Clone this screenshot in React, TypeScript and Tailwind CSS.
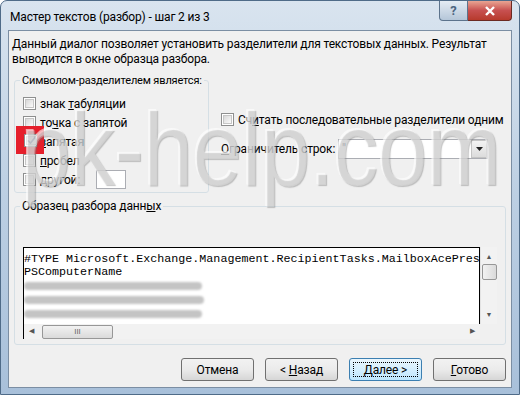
import React from 'react';

const ui = { fontFamily: 'Roboto, "Noto Sans", sans-serif' };
const mono = { fontFamily: '"Liberation Mono", monospace' };

const Box = ({ checked }: { checked?: boolean }) => (
  <span className="w-[13px] h-[13px] shrink-0 border border-[#8e8f8f] bg-white p-[1px] flex">
    <span className="flex-1 border border-[#c6c6c6] bg-gradient-to-br from-[#d8d8d8] to-[#fbfbfb] flex items-center justify-center">
      {checked && (
        <svg width="9" height="9" viewBox="0 0 9 9">
          <path d="M1 4.5 L3.5 7 L8 1.5" fill="none" stroke="#4a5f97" strokeWidth="1.6" />
        </svg>
      )}
    </span>
  </span>
);

const Btn = ({ children, def }: { children: React.ReactNode; def?: boolean }) => (
  <button
    className={
      def
        ? 'w-[73px] h-[23px] rounded-[3px] border border-[#3c7fb1] bg-gradient-to-b from-[#eaf6fd] to-[#bee6fd] text-[12px] text-black p-[3px]'
        : 'w-[73px] h-[23px] rounded-[3px] border border-[#707070] bg-gradient-to-b from-[#f2f2f2] via-[#ebebeb] to-[#d6d6d6] text-[12px] text-black'
    }
  >
    {def ? (
      <span className="w-full h-full border border-dotted border-black flex items-center justify-center">
        {children}
      </span>
    ) : (
      children
    )}
  </button>
);

const Row = ({ children, checked }: { children: React.ReactNode; checked?: boolean }) => (
  <div className="h-[19px] flex items-center gap-[4px] whitespace-nowrap">
    <Box checked={checked} />
    <span>{children}</span>
  </div>
);

const Blur = ({ w }: { w: number }) => (
  <div className="h-[14px] relative">
    <div className="absolute left-0 top-[3px] h-[8px] rounded-full bg-[#c4c4c4] blur-[1px]" style={{ width: w }} />
  </div>
);

export default function App() {
  return (
    <div
      className="w-[520px] h-[395px] relative overflow-hidden rounded-t-[7px] border border-[#4f6b88] bg-gradient-to-b from-[#d9e4ef] via-[#bccfe3] to-[#a8c0da] text-black"
      style={ui}
    >
      {/* title bar */}
      <div className="h-[29px] flex items-start">
        <div className="pl-[9px] pt-[7px] text-[12px] tracking-[-0.15px] text-black">Мастер текстов (разбор) - шаг 2 из 3</div>
        <div className="ml-auto mr-[7px] flex">
          <div className="w-[29px] h-[20px] rounded-bl-[4px] border border-[#5c738c] border-t-0 bg-gradient-to-b from-[#e4ecf4] to-[#b5c6d8] flex items-center justify-center text-[13px] font-bold text-[#4d6580]">
            ?
          </div>
          <div className="w-[44px] h-[20px] rounded-br-[4px] border border-[#6b2a22] border-t-0 border-l-0 bg-gradient-to-b from-[#e8a493] via-[#c75050] to-[#b73a2c] flex items-center justify-center">
            <svg width="12" height="10" viewBox="0 0 12 10">
              <path d="M2 1 L10 9 M10 1 L2 9" stroke="#fff" strokeWidth="2.4" />
            </svg>
          </div>
        </div>
      </div>

      {/* client area */}
      <div className="mx-[7px] h-[358px] border border-[#7b8ea3] bg-[#f0f0f0] text-[12px] tracking-[-0.15px] flex flex-col">
        <p className="pt-[6px] pl-[3px] leading-[15px]">
          Данный диалог позволяет установить разделители для текстовых данных. Результат
          <br />
          выводится в окне образца разбора.
        </p>

        <div className="mt-[6px] flex items-start">
          <fieldset className="ml-[5px] w-[195px] min-w-0 shrink-0 h-[120px] border border-[#d5dfe5] rounded-[3px] pl-[8px] pt-[6px]">
            <legend className="ml-[-3px] px-[2px] leading-[15px] text-[11px] whitespace-nowrap">Символом-разделителем является:</legend>
            <Row>
              знак <u>т</u>абуляции
            </Row>
            <Row>
              то<u>ч</u>ка с запятой
            </Row>
            <Row checked>
              <u>з</u>апятая
            </Row>
            <Row>
              <u>п</u>робел
            </Row>
            <div className="h-[19px] flex items-center gap-[4px]">
              <Box />
              <span>
                <u>д</u>ругой:
              </span>
              <span className="ml-[12px] w-[30px] h-[19px] border border-[#abadb3] bg-white" />
            </div>
          </fieldset>

          <div className="ml-[12px] pt-[37px] flex flex-col">
            <div className="h-[19px] flex items-center gap-[4px] whitespace-nowrap">
              <Box />
              <span>
                Сч<u>и</u>тать последовательные разделители одним
              </span>
            </div>
            <div className="mt-[10px] flex items-center">
              <span className="w-[117px]">
                <u>О</u>граничитель строк:
              </span>
              <div className="w-[150px] h-[20px] border border-[#abadb3] bg-white flex items-center">
                <span className="pl-[3px] flex-1">&quot;</span>
                <span className="w-[16px] h-[18px] border border-[#c4c4c4] bg-gradient-to-b from-[#f3f3f3] to-[#dcdcdc] flex items-center justify-center">
                  <svg width="7" height="4" viewBox="0 0 7 4">
                    <path d="M0 0 L7 0 L3.5 4 Z" fill="#222" />
                  </svg>
                </span>
              </div>
            </div>
          </div>
        </div>

        <fieldset className="mt-[6px] ml-[5px] w-[492px] h-[146px] border border-[#d5dfe5] rounded-[3px] pl-[8px]">
          <legend className="ml-[-3px] px-[2px] leading-[15px] whitespace-nowrap">
            Образец разбора данн<u>ы</u>х
          </legend>
          <div className="mt-[33px] w-[475px] grid grid-cols-[457px_17px] tracking-normal">
            <div className="h-[77px] border border-black border-b-0 bg-white overflow-hidden pt-[5px] text-[11.7px] leading-[13px] whitespace-nowrap" style={mono}>
              <div>#TYPE Microsoft.Exchange.Management.RecipientTasks.MailboxAcePres</div>
              <div>PSComputerName</div>
              <Blur w={178} />
              <Blur w={180} />
              <Blur w={178} />
            </div>
            <div className="h-[77px] bg-[#f2f2f2] border-l border-[#e3e3e3] flex flex-col items-center">
              <span className="mt-[6px] text-[7px] leading-[8px] text-[#555]">▲</span>
              <span className="mt-[3px] w-[15px] h-[16px] border border-[#979797] rounded-[2px] bg-gradient-to-r from-[#f2f2f2] to-[#dadada]" />
              <span className="mt-auto mb-[5px] text-[7px] leading-[8px] text-[#555]">▼</span>
            </div>
            <div className="h-[15px] bg-[#f2f2f2] border-l border-black flex items-center">
              <span className="ml-[5px] text-[7px] text-[#555]">◀</span>
              <span className="ml-[8px] w-[71px] h-[14px] border border-[#979797] rounded-[2px] bg-gradient-to-b from-[#f2f2f2] to-[#dadada] flex items-center justify-center text-[8px] leading-none text-[#666]">
                III
              </span>
              <span className="ml-auto mr-[5px] text-[7px] text-[#555]">▶</span>
            </div>
            <div className="h-[15px] bg-[#f0f0f0]" />
          </div>
        </fieldset>

        <div className="mt-[13px] pr-[5px] flex justify-end gap-[11px]">
          <Btn>Отмена</Btn>
          <Btn>
            &lt; <u>Н</u>азад
          </Btn>
          <Btn def>
            <u>Д</u>алее &gt;
          </Btn>
          <Btn>
            <u>Г</u>отово
          </Btn>
        </div>
      </div>

      {/* highlight mark */}
      <div className="absolute left-[15px] top-[125px] w-[28px] h-[28px] bg-[#e51f2b] flex items-center justify-center">
        <Box checked />
      </div>

      {/* watermark */}
      <div
        className="absolute left-[20px] top-[110px] text-[90px] leading-none tracking-[-1px] scale-y-[1.15] origin-bottom text-[rgba(255,255,255,0.3)] [text-shadow:1px_1px_1px_rgba(110,110,110,0.4),-1px_-1px_0_rgba(255,255,255,0.6)] pointer-events-none"
        style={{ fontFamily: '"Liberation Sans", Arial, sans-serif' }}
      >
        pk-help.com
      </div>
    </div>
  );
}
